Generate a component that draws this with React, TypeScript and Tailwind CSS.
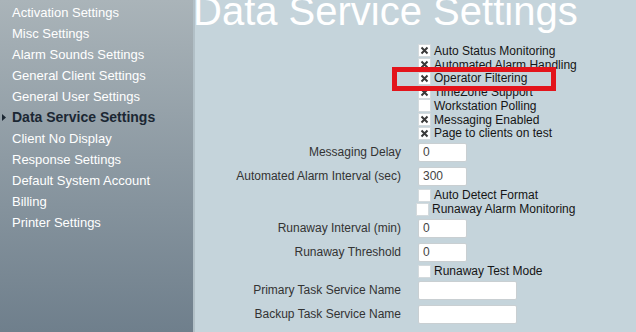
const navItems = [
  "Activation Settings",
  "Misc Settings",
  "Alarm Sounds Settings",
  "General Client Settings",
  "General User Settings",
  "Data Service Settings",
  "Client No Display",
  "Response Settings",
  "Default System Account",
  "Billing",
  "Printer Settings",
];

function CheckBox({ checked, className = "" }: { checked?: boolean; className?: string }) {
  return (
    <span
      className={`flex h-[13px] w-[13px] shrink-0 items-center justify-center border border-[#d4dadd] bg-white ${className}`}
    >
      {checked && (
        <svg width="9" height="9" viewBox="0 0 9 9">
          <path d="M1.5 1.5 L7.5 7.5 M7.5 1.5 L1.5 7.5" stroke="#3a3a3a" strokeWidth="2" />
        </svg>
      )}
    </span>
  );
}

function CheckRow({
  label,
  checked,
  tall,
  shift,
}: {
  label: string;
  checked?: boolean;
  tall?: boolean;
  shift?: boolean;
}) {
  return (
    <div className={`flex items-center ${tall ? "h-[14px]" : "h-[13.75px]"}`}>
      <div className="w-[206px] shrink-0" />
      <div className={`flex items-center gap-[3px] ${shift ? "ml-[15px]" : "ml-[17px]"}`}>
        <CheckBox checked={checked} />
        <span className="whitespace-nowrap text-[12px] leading-none text-[#151515]">{label}</span>
      </div>
    </div>
  );
}

function InputRow({ label, value, wide }: { label: string; value?: string; wide?: boolean }) {
  return (
    <div className="flex h-[24px] items-center">
      <div className="w-[206px] shrink-0 text-right text-[12px] leading-none text-[#333]">{label}</div>
      <div
        className={`ml-[17px] flex h-[19px] items-center rounded-[2px] border border-[#c9cfd2] bg-white px-[4px] text-[12px] text-[#444] ${
          wide ? "w-[99px]" : "w-[49px]"
        }`}
      >
        {value}
      </div>
    </div>
  );
}

export default function App() {
  return (
    <div className="flex h-[332px] w-[636px] overflow-hidden bg-[#c5d4db] font-['Liberation_Sans',Arial,sans-serif]">
      <nav className="w-[195px] shrink-0 border-r-2 border-[#b2c0c7] bg-gradient-to-b from-[#aab4b9] to-[#6f7f8c] pt-[2px]">
        {navItems.map((item) => {
          const active = item === "Data Service Settings";
          return (
            <div key={item} className="flex h-[21px] items-center">
              <span className="flex w-[12px] shrink-0 justify-start pl-[2px]">
                {active && (
                  <svg width="4" height="7" viewBox="0 0 4 7">
                    <path d="M0 0 L4 3.5 L0 7 Z" fill="#1b2733" />
                  </svg>
                )}
              </span>
              <span
                className={
                  active
                    ? "whitespace-nowrap text-[14px] font-bold text-[#1b2733]"
                    : "whitespace-nowrap text-[13px] text-white"
                }
              >
                {item}
              </span>
            </div>
          );
        })}
      </nav>

      <main className="relative flex-1">
        <h1 className="ml-[-2px] mt-[-9px] whitespace-nowrap text-[40px] leading-[40px] text-white">
          Data Service Settings
        </h1>

        <div className="mt-[13px]">
          <CheckRow label="Auto Status Monitoring" checked />
          <CheckRow label="Automated Alarm Handling" checked />
          <CheckRow label="Operator Filtering" checked />
          <CheckRow label="TimeZone Support" checked />
          <CheckRow label="Workstation Polling" />
          <CheckRow label="Messaging Enabled" checked />
          <CheckRow label="Page to clients on test" checked />

          <InputRow label="Messaging Delay" value="0" />
          <InputRow label="Automated Alarm Interval (sec)" value="300" />
          <CheckRow label="Auto Detect Format" tall />
          <CheckRow label="Runaway Alarm Monitoring" tall shift />
          <InputRow label="Runaway Interval (min)" value="0" />
          <InputRow label="Runaway Threshold" value="0" />
          <CheckRow label="Runaway Test Mode" tall />
          <InputRow label="Primary Task Service Name" wide />
          <InputRow label="Backup Task Service Name" wide />
        </div>

        <div className="pointer-events-none absolute left-[197px] top-[67px] h-[24px] w-[164px] border-[5px] border-[#e3141b]" />
      </main>
    </div>
  );
}
